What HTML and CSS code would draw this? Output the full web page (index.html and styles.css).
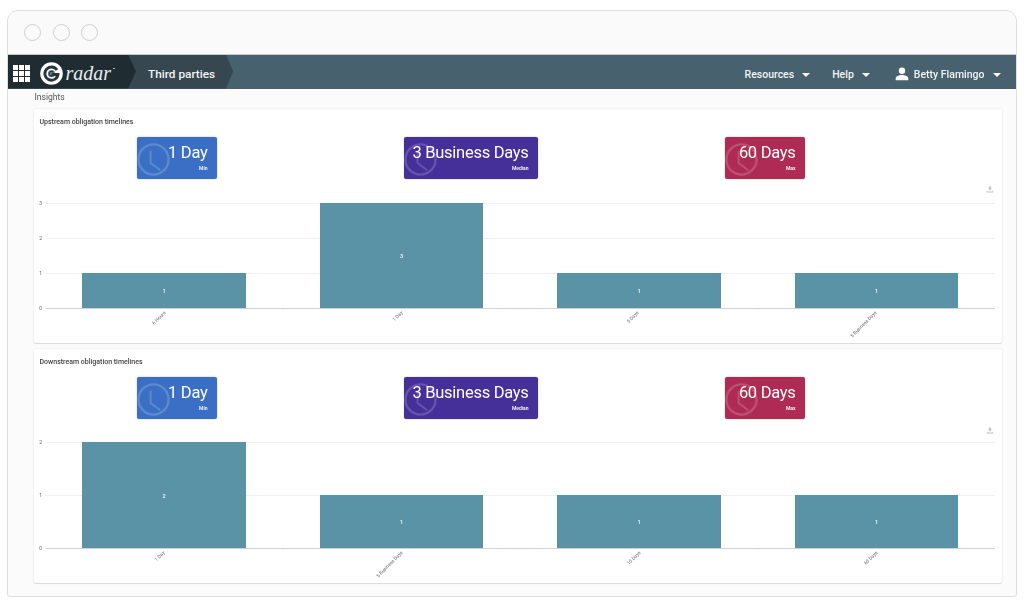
FILE: index.html
```html
<!DOCTYPE html>
<html lang="en">
<head>
<meta charset="utf-8">
<title>Insights</title>
<link rel="stylesheet" href="styles.css">
</head>
<body>
<svg class="defs" width="0" height="0" aria-hidden="true">
  <symbol id="clock" viewBox="0 0 36 36">
    <circle cx="18" cy="18" r="15.500" fill="none" stroke="currentColor" stroke-width="2.400"/>
    <path d="M15 9v12.500l10 7.500" fill="none" stroke="currentColor" stroke-width="2"/>
  </symbol>
  <symbol id="save" viewBox="0 0 10 10">
    <path d="M5 1 7.400 4.600H6v2H4v-2H2.600z M1 7.200h1v1h6v-1h1V9.400H1z" fill="currentColor"/>
  </symbol>
</svg>
<main class="window">
  <header class="titlebar">
    <span class="dot"></span><span class="dot"></span><span class="dot"></span>
  </header>
  <nav class="nav">
    <div class="brand">
      <div class="apps">
        <i></i><i></i><i></i><i></i><i></i><i></i><i></i><i></i><i></i>
      </div>
      <svg class="logo-mark" width="23" height="23" viewBox="0 0 23 23" aria-hidden="true">
        <circle cx="11.500" cy="11.500" r="11.300" fill="#fff"/>
        <circle cx="11.500" cy="11.700" r="3.600" fill="#7d8a90"/>
        <path d="M17 8A6.600 6.600 0 1 0 18 12.500H11.500" fill="none" stroke="#27363d" stroke-width="2.800"/>
        <path d="M13.400 10.400A2.300 2.300 0 1 0 13.700 12.500" fill="none" stroke="#27363d" stroke-width="1.200"/>
      </svg>
      <span class="wordmark">radar</span><span class="tm"></span>
    </div>
    <div class="crumb">Third parties</div>
    <div class="menu">
      <span class="menu-item">Resources<span class="caret"></span></span>
      <span class="menu-item menu-help">Help<span class="caret"></span></span>
      <span class="menu-item">
        <svg class="user" width="14" height="14" viewBox="0 0 14 14" aria-hidden="true">
          <circle cx="7" cy="3.700" r="3.200" fill="#fff"/>
          <path d="M.7 13.200v-1.700C.7 9.300 4.200 8.100 7 8.100s6.300 1.200 6.300 3.400v1.700z" fill="#fff"/>
        </svg>Betty Flamingo<span class="caret"></span>
      </span>
    </div>
  </nav>
  <section class="content">
    <h1 class="page-title">Insights</h1>

    <article class="card">
      <h2 class="card-title">Upstream obligation timelines</h2>
      <div class="tiles">
        <div class="tile tile-blue"><svg class="clock"><use href="#clock"/></svg><strong>1 Day</strong><small>Min</small></div>
        <div class="tile tile-purple"><svg class="clock"><use href="#clock"/></svg><strong>3 Business Days</strong><small>Median</small></div>
        <div class="tile tile-red"><svg class="clock"><use href="#clock"/></svg><strong>60 Days</strong><small>Max</small></div>
      </div>
      <svg class="chart" width="967" height="160" viewBox="0 0 967 160">
        <use class="save" href="#save" x="952" y="2" width="8" height="8"/>
        <g class="grid">
          <path d="M12 20.500H961M12 55.500H961M12 90.500H961"/>
        </g>
        <path class="axis" d="M12 125.500H961M249 125v1.500M486 125v1.500M724 125v1.500"/>
        <g class="ticks">
          <text x="8" y="22">3</text><text x="8" y="57">2</text><text x="8" y="92">1</text><text x="8" y="127">0</text>
        </g>
        <g class="bars">
          <rect x="48" y="90" width="164" height="35"/>
          <rect x="286" y="20" width="163" height="105"/>
          <rect x="523" y="90" width="164" height="35"/>
          <rect x="761" y="90" width="163" height="35"/>
        </g>
        <g class="values">
          <text x="130" y="109.500">1</text><text x="367.500" y="74.500">3</text><text x="605" y="109.500">1</text><text x="842.500" y="109.500">1</text>
        </g>
        <g class="labels">
          <text transform="translate(132 130) rotate(-45)">6 Hours</text>
          <text transform="translate(369 130) rotate(-45)">1 Day</text>
          <text transform="translate(605 130) rotate(-45)">5 Days</text>
          <text transform="translate(843 130) rotate(-45)">5 Business Days</text>
        </g>
      </svg>
    </article>

    <article class="card">
      <h2 class="card-title">Downstream obligation timelines</h2>
      <div class="tiles">
        <div class="tile tile-blue"><svg class="clock"><use href="#clock"/></svg><strong>1 Day</strong><small>Min</small></div>
        <div class="tile tile-purple"><svg class="clock"><use href="#clock"/></svg><strong>3 Business Days</strong><small>Median</small></div>
        <div class="tile tile-red"><svg class="clock"><use href="#clock"/></svg><strong>60 Days</strong><small>Max</small></div>
      </div>
      <svg class="chart" width="967" height="160" viewBox="0 0 967 160">
        <use class="save" href="#save" x="952" y="3" width="8" height="8"/>
        <g class="grid">
          <path d="M12 19.500H961M12 72.500H961"/>
        </g>
        <path class="axis" d="M12 125.500H961M249 125v1.500M486 125v1.500M724 125v1.500"/>
        <g class="ticks">
          <text x="8" y="21">2</text><text x="8" y="74">1</text><text x="8" y="127">0</text>
        </g>
        <g class="bars">
          <rect x="48" y="19" width="164" height="106"/>
          <rect x="286" y="72" width="163" height="53"/>
          <rect x="523" y="72" width="164" height="53"/>
          <rect x="761" y="72" width="163" height="53"/>
        </g>
        <g class="values">
          <text x="130" y="74.500">2</text><text x="367.500" y="100.500">1</text><text x="605" y="100.500">1</text><text x="842.500" y="100.500">1</text>
        </g>
        <g class="labels">
          <text transform="translate(131 130) rotate(-45)">1 Day</text>
          <text transform="translate(369 130) rotate(-45)">5 Business Days</text>
          <text transform="translate(607 130) rotate(-45)">10 Days</text>
          <text transform="translate(844 130) rotate(-45)">60 Days</text>
        </g>
      </svg>
    </article>
  </section>
</main>
</body>
</html>
```
FILE: styles.css
```css
* { box-sizing: border-box; }
html, body { margin: 0; height: 100%; }
body {
  background: #fff;
  padding: 10px 7px 9px;
  font-family: Roboto, "Liberation Sans", sans-serif;
  overflow: hidden;
}
.defs { position: absolute; }

.window {
  width: 1010px;
  height: 587px;
  border: 1.500px solid #dedede;
  border-radius: 11px 11px 3px 3px;
  background: #fbfbfb;
  display: flex;
  flex-direction: column;
  overflow: hidden;
  filter: blur(.35px);
}

.titlebar {
  height: 43.500px;
  flex: none;
  display: flex;
  align-items: center;
  gap: 11.500px;
  padding: 0 0 0 16px;
  background: #fafafa;
  border-bottom: 1px solid #c9c9c9;
}
.dot {
  width: 17px;
  height: 17px;
  border: 1.500px solid #cfcfcf;
  border-radius: 50%;
}

.nav {
  height: 34px;
  flex: none;
  display: flex;
  align-items: stretch;
  background: #47616e;
  color: #fff;
}
.brand {
  position: relative;
  z-index: 1;
  width: 128px;
  flex: none;
  display: flex;
  align-items: center;
  padding: 4px 0 0 5px;
  background: #1f2d33;
  clip-path: polygon(0 0, 120px 0, 128px 50%, 120px 100%, 0 100%);
}
.apps {
  display: grid;
  grid-template-columns: repeat(3, 4.500px);
  gap: 1.500px;
}
.apps i { height: 4.500px; background: #fff; }
.logo-mark { margin-left: 10px; flex: none; }
.wordmark {
  margin-left: 3px;
  font: italic 20px "Liberation Serif", serif;
  color: #e9edef;
}
.tm {
  width: 1.500px;
  height: 1.500px;
  margin: -10px 0 0 2px;
  background: #ccd;
  border-radius: 50%;
}
.crumb {
  width: 105px;
  margin-left: -8px;
  flex: none;
  display: flex;
  align-items: center;
  padding: 5px 0 0 20px;
  background: #36474f;
  clip-path: polygon(0 0, 98px 0, 105px 50%, 98px 100%, 0 100%);
  font-size: 11.800px;
  font-weight: 500;
  color: #f1f4f5;
}
.menu {
  margin-left: auto;
  display: flex;
  align-items: center;
  gap: 22px;
  padding: 5px 15.500px 0 0;
  font-size: 10.500px;
  font-weight: 500;
  color: #f1f4f5;
}
.menu-item { display: flex; align-items: center; }
.menu-help { margin-right: 3px; }
.user { margin: 0 5px 0 0; }
.caret {
  width: 0;
  height: 0;
  margin: 2px 0 0 8px;
  border: 4px solid transparent;
  border-top-color: #fff;
  border-bottom-width: 0;
}

.content {
  flex: 1;
  min-height: 0;
  padding: 0 14.500px 0 25.500px;
  display: flex;
  flex-direction: column;
  gap: 6px;
}
.page-title {
  margin: 2px 0 -3.500px 1px;
  height: 16px;
  font-size: 8.500px;
  line-height: 13px;
  font-weight: 400;
  color: #555;
}
.card {
  height: 234px;
  background: #fff;
  border-radius: 2px;
  box-shadow: 0 0 2px rgba(0, 0, 0, .13), 0 1px 1px rgba(0, 0, 0, .1);
  flex: none;
}
.card-title {
  margin: 0;
  padding: 8px 0 0 6px;
  height: 28px;
  font-size: 7px;
  line-height: 10px;
  font-weight: 500;
  color: #444;
}
.tiles {
  display: flex;
  gap: 187px;
  padding-left: 103px;
}
.tile {
  position: relative;
  overflow: hidden;
  min-width: 80px;
  height: 42px;
  padding: 5px 9px 0;
  border-radius: 2px;
  color: #fff;
  text-align: right;
  box-shadow: 0 0 2px rgba(0, 0, 0, .25);
}
.tile strong {
  display: block;
  font-size: 16.500px;
  letter-spacing: -.28px;
  line-height: 22px;
  font-weight: 400;
  white-space: nowrap;
}
.tile small {
  display: block;
  margin-top: 1px;
  font-size: 5px;
  line-height: 7px;
  font-weight: 500;
}
.tile-blue { background: #3a6fc5; }
.tile-purple { background: #452f99; }
.tile-red { background: #ae2b55; }
.clock {
  position: absolute;
  left: -1px;
  top: 5px;
  width: 35px;
  height: 35px;
  color: rgba(255, 255, 255, .18);
}

.chart { display: block; margin-top: 4px; }
.save { color: #c4c4c4; }
.grid path { stroke: #eef0f2; stroke-width: 1; fill: none; }
.axis { stroke: #cfd2d4; stroke-width: 1; fill: none; }
.bars rect { fill: #5a92a6; }
.ticks text {
  font: 5px Roboto, sans-serif;
  fill: #666;
  text-anchor: end;
}
.values text {
  font: 500 5.500px Roboto, sans-serif;
  fill: #fff;
  text-anchor: middle;
}
.labels text {
  font: 4.800px Roboto, sans-serif;
  fill: #666;
  text-anchor: end;
}
```
